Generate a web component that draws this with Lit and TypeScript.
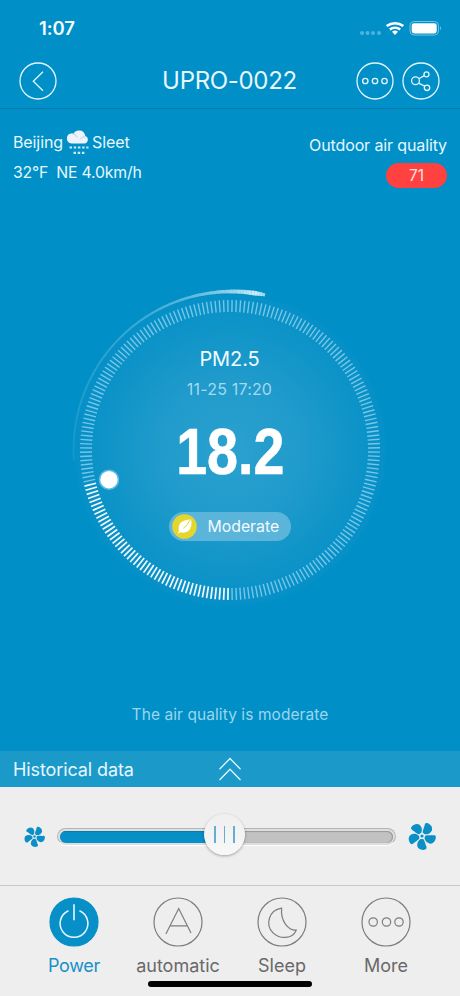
import { LitElement, html, svg, css } from "lit";
import { customElement, property } from "lit/decorators.js";

const TICKS = 220;

const polar = (cx: number, cy: number, r: number, deg: number) => {
  const a = (deg * Math.PI) / 180;
  return [cx + r * Math.cos(a), cy + r * Math.sin(a)];
};

@customElement("air-dial")
class AirDial extends LitElement {
  @property({ type: Number }) progress = 0.212;

  static styles = css`
    :host { display: block; width: 320px; height: 320px; }
    svg { display: block; overflow: visible; }
  `;

  render() {
    const c = 160;
    const ticks = Array.from({ length: TICKS }, (_, i) => {
      const deg = 90.8 + (i * 360) / TICKS;
      const [x1, y1] = polar(c, c, 138, deg);
      const [x2, y2] = polar(c, c, 150, deg);
      const on = i / TICKS < this.progress;
      return svg`<line x1=${x1} y1=${y1} x2=${x2} y2=${y2} stroke=${on ? "#fff" : "#c4ecff"}
        stroke-width=${on ? 1.7 : 1.4} stroke-opacity=${on ? 0.95 : 0.58} />`;
    });
    const n = 108;
    const trail = Array.from({ length: n }, (_, i) => {
      const t = i / n;
      const a = 176 + t * 106;
      const [x1, y1] = polar(162, 160, 158.5, a);
      const [x2, y2] = polar(162, 160, 158.5, a + 1.02);
      const tip = Math.min(1, (1 - t) / 0.04);
      return svg`<line x1=${x1} y1=${y1} x2=${x2} y2=${y2} stroke="#dff5ff"
        stroke-width=${(2 + 3.4 * t ** 5) * (0.5 + 0.5 * tip)}
        stroke-opacity=${Math.min(1, (0.08 + 0.3 * t + 0.7 * t ** 6) * (0.6 + 0.4 * tip))} />`;
    });
    return html`<svg width="320" height="320" viewBox="0 0 320 320">
      <defs>
        <radialGradient id="glow">
          <stop offset="0" stop-color="#2ba1cf" />
          <stop offset="0.45" stop-color="#209bcb" />
          <stop offset="1" stop-color="#0590c7" />
        </radialGradient>
      </defs>
      <circle cx="160" cy="160" r="156" fill="url(#glow)" />
      ${ticks}${trail}
      <circle cx="39" cy="189.700" r="10.3" fill="#8fd3f2" fill-opacity="0.6" />
      <circle cx="39" cy="189.700" r="8.7" fill="#fff" />
    </svg>`;
  }
}

const ring = (body: unknown) => html`<svg width="38" height="38" viewBox="0 0 38 38" fill="none" stroke="#e3f6fd" stroke-width="1.3">
  <circle cx="19" cy="19" r="18" />${body}</svg>`;

const fan = (size: number) => html`<svg width=${size} height=${size} viewBox="-14 -14 28 28" fill="#0a8fc6">
  ${[0, 72, 144, 216, 288].map(
    (a) => svg`<path transform=${`rotate(${a})`} d="M-1.200 3C-4 4.400-5.400 7.800-4.600 10.600C-3.600 13.700 .8 14.600 3.600 13.300C4.900 12.700 4.800 11.600 4.200 10.300C3.300 8.100 3 5.200 1.300 3Z" />`
  )}
  <circle r="1.6" /></svg>`;

const navItems = [
  { label: "Power", on: true, icon: svg`<path d="M19.5 13.7A13.9 13.9 0 1 0 30.5 13.7" stroke-width="1.5" /><path d="M25 7.3V23.2" stroke-width="1.6" />` },
  { label: "automatic", on: false, icon: svg`<path d="M12.9 37L25.7 11.5L38 36M16.6 28.8H34.5" />` },
  { label: "Sleep", on: false, icon: svg`<path d="M24.6 11.2C11.500 13.200 8.200 28 15.800 35.600C23 42.800 35.500 42 39.200 33.200C31 33.500 23.500 24 24.600 11.200Z" />` },
  { label: "More", on: false, icon: svg`<circle cx="12.2" cy="25" r="4.2" /><circle cx="25.500" cy="25" r="4.2" /><circle cx="38" cy="25" r="4.200" />` },
];

@customElement("app-root")
class AppRoot extends LitElement {
  static styles = css`
    :host {
      display: flex; flex-direction: column; position: relative;
      width: 460px; height: 996px; overflow: hidden;
      background: #008fc6; color: #e6f7fe;
      font-family: Inter, "Liberation Sans", sans-serif;
      white-space: nowrap;
    }
    * { box-sizing: border-box; }
    svg { display: block; flex: none; }
    .status { height: 55.5px; padding: 0 17px 0 39px; display: flex; justify-content: space-between; align-items: center; }
    .time { font-size: 18.5px; font-weight: 600; letter-spacing: -.1px; color: #f4fcff; }
    .header { height: 53px; border-bottom: 1px solid #087cae; padding: 0 19.5px 1px 19.400px; display: grid; grid-template-columns: 84px 1fr 84px; align-items: center; }
    .title { text-align: center; font-size: 24px; line-height: 30px; letter-spacing: -.32px; margin: -1px 1px 0 0; }
    .actions { display: flex; gap: 8px; margin-left: -.4px; }
    .weather { display: flex; justify-content: space-between; padding: 18.5px 13px 0; height: 171.5px; }
    .line { display: flex; height: 30px; align-items: center; font-size: 16px; letter-spacing: -.1px; }
    .line svg { margin: 0 2px 0 3px; }
    .wind { gap: 8px; font-size: 15.800px; letter-spacing: -.18px; }
    .outdoor { display: flex; flex-direction: column; align-items: flex-end; font-size: 16px; padding-top: 5px; }
    .outdoor span { line-height: 26px; letter-spacing: -.12px; }
    .badge { margin-top: 5px; width: 61px; height: 25px; border-radius: 13px; background: #ff4140; line-height: 25px; text-align: center; font-size: 15.500px; color: #ffe3e1; }
    .gauge { align-self: center; display: grid; width: 320px; height: 320px; margin: 10px 1px 0 0; }
    .gauge > * { grid-area: 1 / 1; }
    .reading { display: flex; flex-direction: column; align-items: center; padding-top: 54px; position: relative; }
    .metric { font-size: 20px; line-height: 30px; color: #f2fbff; letter-spacing: -.1px; }
    .date { font-size: 16px; line-height: 30px; color: #a5d9ef; letter-spacing: .18px; }
    .value { font: bold 65px/70px "Liberation Sans", sans-serif; color: #fff; -webkit-text-stroke: .6px #fff; transform: scaleX(.855); margin: 13px 0 0 2px; height: 88px; }
    .level { width: 122px; height: 29px; border-radius: 15px; background: #5bb4da; display: flex; align-items: center; padding-left: 3px; gap: 11px; font-size: 15.800px; color: #f2fbff; margin-top: 6.500px; }
    .summary { margin-top: 94px; height: 57px; text-align: center; line-height: 22px; font-size: 15.5px; letter-spacing: .08px; color: #9ad6ef; flex: 1; }
    .history { height: 36px; background: #1b9aca; padding: 0 13px; display: grid; grid-template-columns: 1fr 24px 1fr; align-items: center; font-size: 18px; letter-spacing: -.1px; flex: none; }
    .speed { height: 99px; flex: none; background: #eee; border-bottom: 1px solid #c9c9c9; display: flex; align-items: center; padding: 0 24px; }
    .track { position: relative; width: 339px; height: 17px; margin: 0 12px 0 12px; border-radius: 9px; background: #dedede; border: 1px solid #b5b5b5; border-bottom-color: #ddd; padding: 2px; box-shadow: 0 1px 1px #fff; }
    .groove { height: 12px; border-radius: 6px; background: #c2c2c2; box-shadow: inset 0 1px 1px #999, inset -1px 0 1px #999; overflow: hidden; }
    .fill { height: 100%; background: #078fc7; box-shadow: inset 0 1px 1px #0879a7; }
    .thumb { position: absolute; top: -15px; left: 146px; width: 41px; height: 41px; border-radius: 50%; background: linear-gradient(#efefef, #f8f8f8); box-shadow: 0 1px 3px rgba(0,0,0,.34); display: flex; justify-content: center; align-items: center; gap: 8px; }
    .thumb i { width: 1.4px; height: 17px; background: #65aed0; }
    .nav { height: 110px; flex: none; background: #eee; display: grid; grid-template-columns: repeat(4, 104px); padding: 11px 22px 0; color: #696969; font-size: 18px; }
    .item { display: flex; flex-direction: column; align-items: center; }
    .item span { line-height: 24px; margin-top: 7px; }
    .item.active { color: #1990c8; letter-spacing: -.3px; }
    .home { position: absolute; left: 148px; top: 981px; width: 164px; height: 6px; border-radius: 3px; background: #000; }
  `;

  render() {
    return html`
      <div class="status">
        <span class="time">1:07</span>
        <svg width="84" height="20" viewBox="0 0 84 20">
          <g fill="#4fb4dc"><circle cx="3" cy="15" r="2" /><circle cx="8.500" cy="15" r="2" /><circle cx="14" cy="15" r="2" /><circle cx="20" cy="15" r="2" /></g>
          <g fill="none" stroke="#fff" stroke-width="2.500"><path d="M27.700 8.100A13.500 13.500 0 0 1 44.300 8.100" /><path d="M30.800 11.500A8.500 8.500 0 0 1 41.200 11.500" /></g>
          <path d="M33 13.800A4.700 4.700 0 0 1 39 13.800L36 17Z" fill="#fff" />
          <rect x="51" y="3.500" width="28.500" height="13.500" rx="4" fill="none" stroke="#72c4e5" />
          <rect x="52.700" y="5.200" width="25" height="10.200" rx="2.400" fill="#fff" />
          <path d="M81 8q2 2 0 4.500Z" fill="#72c4e5" />
        </svg>
      </div>
      <div class="header">
        ${ring(svg`<path d="M24 9.700L14.300 19.200L24 28.700" />`)}
        <div class="title">UPRO-0022</div>
        <div class="actions">
          ${ring(svg`<circle cx="9.300" cy="19" r="2.700" /><circle cx="19" cy="19" r="2.700" /><circle cx="28.500" cy="19" r="2.700" />`)}
          ${ring(svg`<circle cx="13.500" cy="18.700" r="3.900" /><circle cx="24.500" cy="12.300" r="2.500" /><circle cx="25" cy="25.800" r="2.700" /><path d="M16.900 16.800L22.300 13.600M16.500 21.200L22.800 24.200" />`)}
        </div>
      </div>
      <div class="weather">
        <div>
          <div class="line"><span>Beijing</span>
            <svg width="24" height="26" viewBox="0 0 24 26">
              <path d="M5.500 15.500A5 5 0 0 1 5 5.600Q6.600 5.100 7.500 5.700A6.300 6.300 0 0 1 19.200 7.800A4.100 4.100 0 0 1 19.300 15.500Z" fill="#eef3fb" transform="translate(0 -1)" />
              <path d="M6 4.500Q10 5 11.300 8.500M14.300 10.500Q16 7 19.500 7.800" fill="none" stroke="#9ccbe4" stroke-width=".8" />
              <g fill="none" stroke="#c9eafa" stroke-width="2.200" stroke-dasharray="2.500 1.700"><path d="M3.500 18.500H22.500M7.500 23.800H19" /></g>
            </svg><span>Sleet</span></div>
          <div class="line wind"><span>32°F</span><span>NE 4.0km/h</span></div>
        </div>
        <div class="outdoor"><span>Outdoor air quality</span><div class="badge">71</div></div>
      </div>
      <div class="gauge">
        <air-dial></air-dial>
        <div class="reading">
          <div class="metric">PM2.5</div>
          <div class="date">11-25 17:20</div>
          <div class="value">18.2</div>
          <div class="level">
            <svg width="25" height="25" viewBox="0 0 25 25"><circle cx="12.500" cy="12.500" r="12.300" fill="#e5d62d" />
              <path d="M5.700 18.700L7 17.200C5.500 9.500 9 6.200 19 5.300C20.800 13 17.500 20.500 7.900 18.300L6.600 19.500Z" fill="#fff" />
              <path d="M11.500 14.200Q16 11 18.300 5.500" fill="none" stroke="#e5d62d" stroke-width="1" /></svg>
            <span>Moderate</span></div>
        </div>
      </div>
      <div class="summary">The air quality is moderate</div>
      <div class="history"><span>Historical data</span>
        <svg width="24" height="26" viewBox="0 0 24 26" fill="none" stroke="#e1f6ff" stroke-width="1.300"><path d="M1.500 13.300L12 2.500L22.500 13.300M1.500 24L12 13.200L22.500 24" /></svg>
      </div>
      <div class="speed">
        ${fan(21)}
        <div class="track"><div class="groove"><div class="fill" style="width:50%"></div></div><div class="thumb"><i></i><i></i><i></i></div></div>
        ${fan(28)}
      </div>
      <div class="nav">
        ${navItems.map((n) => html`<div class="item ${n.on ? "active" : ""}">
          <svg width="50" height="50" viewBox="0 0 50 50" fill="none" stroke=${n.on ? "#e8f8ff" : "#7d7d7d"} stroke-width="1.200">
            <circle cx="25" cy="25" r="24" fill=${n.on ? "#078fc7" : "none"} stroke=${n.on ? "#078fc7" : "#7d7d7d"} />${n.icon}</svg>
          <span>${n.label}</span></div>`)}
      </div>
      <div class="home"></div>
    `;
  }
}
